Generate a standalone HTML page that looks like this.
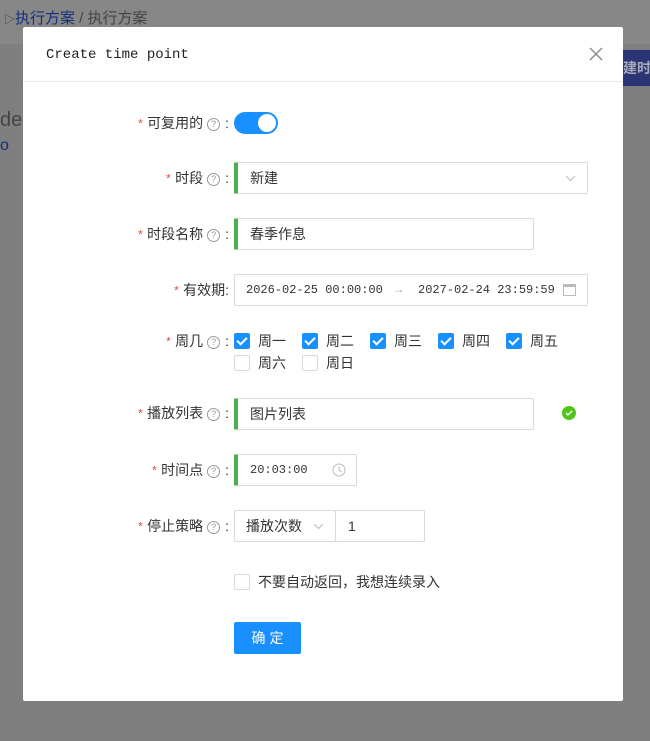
<!DOCTYPE html>
<html><head><meta charset="utf-8"><style>
*{box-sizing:border-box;margin:0;padding:0}
body{width:650px;height:741px;overflow:hidden;background:#7f7f7f;font-family:"Liberation Sans","Noto Sans CJK SC",sans-serif;font-size:14px;color:#333;position:relative}
.a{position:absolute}
.modal{left:23px;top:27px;width:600px;height:674px;background:#fff;border-radius:2px}
.hdr{left:0;top:0;width:600px;height:55px;border-bottom:1px solid #e8e8e8}
.lbl{position:absolute;left:0;width:229px;text-align:right;white-space:nowrap;color:#333;font-size:14px;line-height:20px}
.lbl .s{color:#e04848;font-family:"Liberation Mono",monospace;font-size:12px;margin-right:3px}
.q{display:inline-block;width:13px;height:13px;border:1px solid #999;border-radius:50%;font-size:9px;line-height:11px;text-align:center;color:#999;vertical-align:1px;margin:0 5px 0 4px}
.box{position:absolute;border:1px solid #d9d9d9;border-radius:2px;background:#fff;line-height:30px;font-size:14px;color:#333}
.gb{border-left:4px solid #4caf50;padding-left:12px}
.cb{position:absolute;width:16px;height:16px;border-radius:2px;background:#1890ff}
.cb::after{content:"";position:absolute;left:5px;top:2px;width:4px;height:8px;border:solid #fff;border-width:0 2px 2px 0;transform:rotate(45deg)}
.cbe{position:absolute;width:16px;height:16px;border-radius:2px;border:1px solid #d9d9d9;background:#fff}
.t{position:absolute;font-size:14px;line-height:20px;color:#333;white-space:nowrap}
.chev{position:absolute;right:11px;top:12px}
</style></head><body>
<div class="a" style="left:0;top:0;width:650px;height:44px;background:#878787"></div>
<div class="t" style="left:4px;top:9px;font-size:15px;color:#444"><span style="font-size:11px">▷</span><span style="color:#12307a">执行方案</span> / 执行方案</div>
<div class="a" style="left:623px;top:50px;width:27px;height:36px;background:#2b3575;color:#aab;font-size:14px;line-height:36px;overflow:hidden;white-space:nowrap;font-weight:bold">建时间</div>
<div class="t" style="left:0;top:110px;font-size:20px;color:#444">de</div>
<div class="t" style="left:0;top:136px;font-size:16px;color:#12307a">o</div>
<div class="a modal">
 <div class="a hdr"><div class="t" style="left:23px;top:18px;font-family:'Liberation Mono',monospace;font-size:14px;color:#222">Create time point</div>
 <svg class="a" style="left:566px;top:20px" width="14" height="14" viewBox="0 0 14 14"><path d="M1 1L13 13M13 1L1 13" stroke="#888" stroke-width="1.4"/></svg></div>
</div>
<div class="lbl" style="top:113px"><span class="s">*</span>可复用的<span class="q">?</span>:</div>
<div class="a" style="left:234px;top:112px;width:44px;height:22px;border-radius:11px;background:#1890ff"><div class="a" style="left:24px;top:2px;width:18px;height:18px;border-radius:50%;background:#fff"></div></div>

<div class="lbl" style="top:168px"><span class="s">*</span>时段<span class="q">?</span>:</div>
<div class="box gb" style="left:234px;top:162px;width:354px;height:32px">新建<svg class="chev" width="11" height="7" viewBox="0 0 11 7"><path d="M1 1L5.5 5.5L10 1" stroke="#bbb" fill="none"/></svg></div>

<div class="lbl" style="top:224px"><span class="s">*</span>时段名称<span class="q">?</span>:</div>
<div class="box gb" style="left:234px;top:218px;width:300px;height:32px">春季作息</div>

<div class="lbl" style="top:280px"><span class="s">*</span>有效期:</div>
<div class="box" style="left:234px;top:274px;width:354px;height:32px;font-family:'Liberation Mono',monospace;font-size:12px">
<span class="a" style="left:11px;top:0">2026-02-25 00:00:00</span>
<span class="a" style="left:160px;top:0;color:#aaa">→</span>
<span class="a" style="left:183px;top:0">2027-02-24 23:59:59</span>
<span style="position:absolute;right:11px;top:9px;width:13px;height:12px;border:1px solid #bbb;border-top-width:3px"></span></div>

<div class="lbl" style="top:331px"><span class="s">*</span>周几<span class="q">?</span>:</div>
<div class="cb" style="left:234px;top:333px"></div><div class="t" style="left:258px;top:331px">周一</div>
<div class="cb" style="left:302px;top:333px"></div><div class="t" style="left:326px;top:331px">周二</div>
<div class="cb" style="left:370px;top:333px"></div><div class="t" style="left:394px;top:331px">周三</div>
<div class="cb" style="left:438px;top:333px"></div><div class="t" style="left:462px;top:331px">周四</div>
<div class="cb" style="left:506px;top:333px"></div><div class="t" style="left:530px;top:331px">周五</div>
<div class="cbe" style="left:234px;top:355px"></div><div class="t" style="left:258px;top:353px">周六</div>
<div class="cbe" style="left:302px;top:355px"></div><div class="t" style="left:326px;top:353px">周日</div>

<div class="lbl" style="top:403px"><span class="s">*</span>播放列表<span class="q">?</span>:</div>
<div class="box gb" style="left:234px;top:398px;width:300px;height:32px">图片列表</div>
<div class="a" style="left:562px;top:406px;width:14px;height:14px;border-radius:50%;background:#52c41a"><svg class="a" style="left:3px;top:4px" width="8" height="6" viewBox="0 0 8 6"><path d="M1 3L3 5L7 1" stroke="#fff" stroke-width="1.4" fill="none"/></svg></div>

<div class="lbl" style="top:460px"><span class="s">*</span>时间点<span class="q">?</span>:</div>
<div class="box gb" style="left:234px;top:454px;width:123px;height:32px;font-family:'Liberation Mono',monospace;font-size:12px">20:03:00<svg class="a" style="right:10px;top:8px" width="14" height="14" viewBox="0 0 14 14"><circle cx="7" cy="7" r="6" stroke="#bbb" fill="none"/><path d="M7 3.5V7L9.5 9" stroke="#bbb" fill="none"/></svg></div>

<div class="lbl" style="top:516px"><span class="s">*</span>停止策略<span class="q">?</span>:</div>
<div class="box" style="left:234px;top:510px;width:102px;height:32px;padding-left:11px">播放次数<svg class="chev" width="11" height="7" viewBox="0 0 11 7"><path d="M1 1L5.5 5.5L10 1" stroke="#bbb" fill="none"/></svg></div>
<div class="box" style="left:335px;top:510px;width:90px;height:32px;padding-left:12px">1</div>

<div class="cbe" style="left:234px;top:574px"></div><div class="t" style="left:258px;top:572px">不要自动返回，我想连续录入</div>
<div class="a" style="left:234px;top:622px;width:67px;height:32px;background:#1890ff;border-radius:2px;color:#fff;text-align:center;line-height:32px;letter-spacing:4px;padding-left:4px">确定</div>
</body></html>
